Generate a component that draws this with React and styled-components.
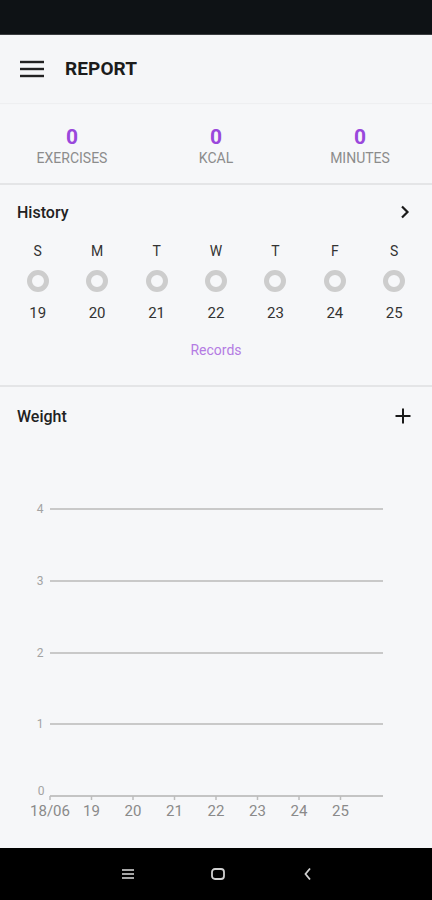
import React from "react";
import styled, { createGlobalStyle } from "styled-components";

const Global = createGlobalStyle`
  html, body { margin: 0; padding: 0; background: #f6f7f9; }
  body { font-family: Roboto, "Noto Sans", "Liberation Sans", sans-serif; }
  * { box-sizing: border-box; }
`;

const Screen = styled.div`
  width: 432px;
  height: 900px;
  display: flex;
  flex-direction: column;
  background: #f6f7f9;
  overflow: hidden;
`;

const StatusBar = styled.div`
  height: 35px;
  flex: none;
  background: #0e1215;
  border-bottom: 1px solid #3a3d40;
`;

const Header = styled.header`
  height: 68px;
  flex: none;
  display: flex;
  align-items: center;
  gap: 21px;
  padding-left: 20px;
  background: #f5f6f8;
  box-shadow: 0 1px 1px rgba(0, 0, 0, 0.03);
`;

const Title = styled.h1`
  margin: 0 0 2px;
  font-size: 19px;
  font-weight: 700;
  color: #1c1c1c;
  letter-spacing: 0.1px;
`;

const Stats = styled.section`
  display: grid;
  grid-template-columns: repeat(3, 1fr);
  padding: 22px 0 16px;
`;

const Stat = styled.div`
  display: flex;
  flex-direction: column;
  align-items: center;
`;

const StatValue = styled.span`
  font-size: 21px;
  font-weight: 700;
  color: #9a48dc;
  line-height: 24px;
`;

const StatLabel = styled.span`
  font-size: 14px;
  color: #8c8c8c;
  line-height: 18px;
`;

const Divider = styled.div`
  height: 2px;
  flex: none;
  background: #e4e5e7;
`;

const Section = styled.section`
  flex: none;
  padding: ${(p) => p.$pad};
`;

const SectionHead = styled.div`
  display: flex;
  align-items: center;
  justify-content: space-between;
  padding: 0 21px 0 17px;
  height: 24px;
`;

const SectionTitle = styled.h2`
  margin: 0;
  font-size: 16px;
  font-weight: 500;
  color: #222;
`;

const Days = styled.div`
  display: grid;
  grid-template-columns: repeat(7, 1fr);
  padding: 0 8px;
  margin-top: 18px;
`;

const Day = styled.div`
  display: flex;
  flex-direction: column;
  align-items: center;
`;

const DayLetter = styled.span`
  font-size: 14px;
  color: #333;
  line-height: 18px;
`;

const Ring = styled.span`
  width: 22px;
  height: 22px;
  border-radius: 50%;
  border: 5.5px solid #cdcdcd;
  background: #f6f7f9;
  margin-top: 10px;
`;

const DayNum = styled.span`
  font-size: 15px;
  color: #333;
  margin-top: 11px;
  line-height: 20px;
`;

const RecordsLink = styled.div`
  text-align: center;
  font-size: 14px;
  color: #b47be3;
  margin-top: 19px;
`;

const ChartWrap = styled.div`
  flex: 1;
  min-height: 0;
`;

const NavBar = styled.nav`
  height: 52px;
  flex: none;
  background: #000;
  display: flex;
  justify-content: center;
  align-items: center;
  gap: 70px;
  padding-left: 4px;
`;

const NavBtn = styled.span`
  width: 20px;
  height: 20px;
  display: flex;
  align-items: center;
  justify-content: center;
`;

const Menu = () => (
  <svg width="24" height="18" viewBox="0 0 24 18">
    <g stroke="#222" strokeWidth="2.4" strokeLinecap="butt">
      <line x1="0" y1="2" x2="24" y2="2" />
      <line x1="0" y1="9" x2="24" y2="9" />
      <line x1="0" y1="16" x2="24" y2="16" />
    </g>
  </svg>
);

const Chevron = () => (
  <svg width="12" height="14" viewBox="0 0 12 14">
    <path d="M3 1.5 L8.5 7 L3 12.5" fill="none" stroke="#1a1a1a" strokeWidth="2.2" />
  </svg>
);

const Plus = () => (
  <svg width="16" height="16" viewBox="0 0 16 16">
    <g stroke="#1a1a1a" strokeWidth="2">
      <line x1="8" y1="0.5" x2="8" y2="15.5" />
      <line x1="0.5" y1="8" x2="15.5" y2="8" />
    </g>
  </svg>
);

const days = [
  ["S", 19], ["M", 20], ["T", 21], ["W", 22], ["T", 23], ["F", 24], ["S", 25],
];

const Chart = () => {
  const top = 428;
  const height = 420;
  const grid = [
    [4, 509], [3, 581], [2, 653], [1, 724],
  ];
  const xs = ["18/06", "19", "20", "21", "22", "23", "24", "25"];
  return (
    <svg width="432" height={height} viewBox={`0 ${top} 432 ${height}`} style={{ display: "block" }}>
      {grid.map(([v, y]) => (
        <g key={v}>
          <line x1="50" y1={y} x2="383" y2={y} stroke="#c9c9c9" strokeWidth="2" />
          <text x="40" y={y + 4} fontSize="12" fill="#a3a3a3" textAnchor="middle" fontFamily="Roboto, sans-serif">{v}</text>
        </g>
      ))}
      <line x1="50" y1="796" x2="383" y2="796" stroke="#c4c4c4" strokeWidth="2" />
      <text x="41" y="795" fontSize="12" fill="#a3a3a3" textAnchor="middle" fontFamily="Roboto, sans-serif">0</text>
      {xs.map((l, i) => {
        const x = 50 + i * 41.5;
        return (
          <g key={l}>
            <line x1={x} y1="796" x2={x} y2="800" stroke="#bdbdbd" strokeWidth="1.5" />
            <text x={x} y="816" fontSize="15" fill="#8a8a8a" textAnchor="middle" fontFamily="Roboto, sans-serif">{l}</text>
          </g>
        );
      })}
    </svg>
  );
};

export default function App() {
  return (
    <Screen>
      <Global />
      <StatusBar />
      <Header>
        <Menu />
        <Title>REPORT</Title>
      </Header>
      <Stats>
        <Stat><StatValue>0</StatValue><StatLabel>EXERCISES</StatLabel></Stat>
        <Stat><StatValue>0</StatValue><StatLabel>KCAL</StatLabel></Stat>
        <Stat><StatValue>0</StatValue><StatLabel>MINUTES</StatLabel></Stat>
      </Stats>
      <Divider />
      <Section $pad="15px 0 27px">
        <SectionHead>
          <SectionTitle>History</SectionTitle>
          <Chevron />
        </SectionHead>
        <Days>
          {days.map(([l, n]) => (
            <Day key={n}>
              <DayLetter>{l}</DayLetter>
              <Ring />
              <DayNum>{n}</DayNum>
            </Day>
          ))}
        </Days>
        <RecordsLink>Records</RecordsLink>
      </Section>
      <Divider />
      <Section $pad="17px 0 0">
        <SectionHead>
          <SectionTitle>Weight</SectionTitle>
          <Plus />
        </SectionHead>
      </Section>
      <ChartWrap>
        <Chart />
      </ChartWrap>
      <NavBar>
        <NavBtn>
          <svg width="12" height="12" viewBox="0 0 12 12">
            <g stroke="#d0d0d0" strokeWidth="1.6">
              <line x1="0" y1="2" x2="12" y2="2" />
              <line x1="0" y1="6" x2="12" y2="6" />
              <line x1="0" y1="10" x2="12" y2="10" />
            </g>
          </svg>
        </NavBtn>
        <NavBtn>
          <svg width="14" height="12" viewBox="0 0 14 12">
            <rect x="1" y="1" width="12" height="10" rx="3" fill="none" stroke="#d0d0d0" strokeWidth="1.8" />
          </svg>
        </NavBtn>
        <NavBtn>
          <svg width="10" height="14" viewBox="0 0 10 14">
            <path d="M7 1.5 L2.5 7 L7 12.5" fill="none" stroke="#d0d0d0" strokeWidth="1.8" />
          </svg>
        </NavBtn>
      </NavBar>
    </Screen>
  );
}
